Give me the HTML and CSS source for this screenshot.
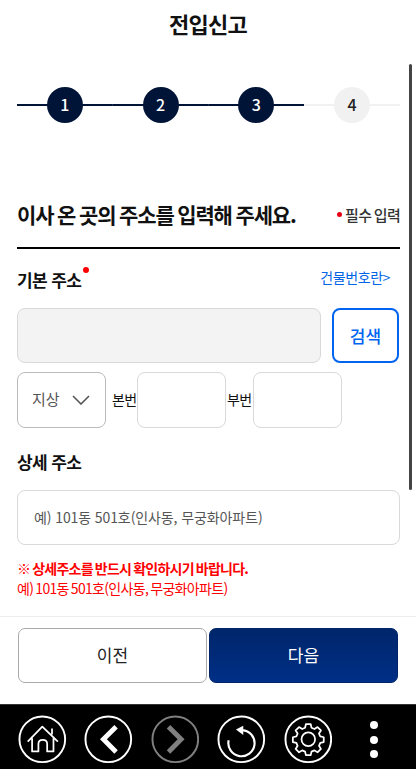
FILE: index.html
```html
<!DOCTYPE html>
<html lang="ko">
<head>
<meta charset="utf-8">
<title>전입신고</title>
<link rel="stylesheet" href="styles.css">
</head>
<body>
<div class="app">
  <header class="title">전입신고</header>
  <main class="content">
    <div class="scrollbar"></div>
    <ol class="steps">
      <li class="step done"><span>1</span></li>
      <li class="step done"><span>2</span></li>
      <li class="step done"><span>3</span></li>
      <li class="step"><span>4</span></li>
    </ol>
    <div class="heading">
      <h1>이사 온 곳의 주소를 입력해 주세요.</h1>
      <p class="req"><i class="dot"></i>필수 입력</p>
    </div>
    <div class="label-row">
      <h2 class="label">기본 주소<i class="dot sup"></i></h2>
      <a class="link">건물번호란&gt;</a>
    </div>
    <div class="addr-row">
      <div class="field disabled"></div>
      <button class="search">검색</button>
    </div>
    <div class="num-row">
      <div class="field select">지상
        <svg width="18" height="10" viewBox="0 0 18 10"><path d="M1 1l8 8 8-8" fill="none" stroke="#555" stroke-width="1.6"/></svg>
      </div>
      <span class="num-label first">본번</span>
      <div class="field num"></div>
      <span class="num-label">부번</span>
      <div class="field num"></div>
    </div>
    <h2 class="label detail">상세 주소</h2>
    <div class="field text">예) 101동 501호(인사동, 무궁화아파트)</div>
    <p class="warn strong">※ 상세주소를 반드시 확인하시기 바랍니다.</p>
    <p class="warn plain">예) 101동 501호(인사동, 무궁화아파트)</p>
  </main>
  <div class="actions">
    <button class="btn prev">이전</button>
    <button class="btn next">다음</button>
  </div>
  <nav class="nav">
    <svg class="ico" viewBox="0 0 50 50"><circle cx="25" cy="25" r="23.5" fill="none" stroke="#fff" stroke-width="2"/><path d="M10 27.500L25 12l16 15.500M35 14v6M14.500 24v13.500h6.500v-8q0-4 4.500-4t4.500 4v8h6.500V24" fill="none" stroke="#fff" stroke-width="1.800" stroke-linejoin="round"/></svg>
    <svg class="ico" viewBox="0 0 50 50"><circle cx="25" cy="25" r="23.500" fill="none" stroke="#fff" stroke-width="2"/><path d="M33 12L20 25l13 13" fill="none" stroke="#fff" stroke-width="5"/></svg>
    <svg class="ico" viewBox="0 0 50 50"><circle cx="25" cy="25" r="23.500" fill="none" stroke="#808080" stroke-width="2"/><path d="M18 12l13 13-13 13" fill="none" stroke="#808080" stroke-width="5"/></svg>
    <svg class="ico" viewBox="0 0 50 50"><circle cx="25" cy="25" r="23.500" fill="none" stroke="#fff" stroke-width="2"/><path d="M26 15.500A13.500 13.500 0 1 1 12 26" fill="none" stroke="#fff" stroke-width="2.200"/><path d="M27 11v9.500L19.500 15z" fill="#fff"/></svg>
    <svg class="ico" viewBox="0 0 50 50"><circle cx="25" cy="25" r="23.500" fill="none" stroke="#fff" stroke-width="2"/><circle cx="25" cy="25" r="7" fill="none" stroke="#fff" stroke-width="1.800"/><path d="M22.500 9.500h5l.8 3.600 3 1.300 3.200-2 3.500 3.500-2 3.200 1.300 3 3.600.8v5l-3.600.8-1.300 3 2 3.200-3.500 3.500-3.200-2-3 1.300-.8 3.600h-5l-.8-3.600-3-1.300-3.200 2-3.500-3.500 2-3.200-1.300-3-3.600-.8v-5l3.600-.8 1.300-3-2-3.200 3.500-3.500 3.200 2 3-1.300z" fill="none" stroke="#fff" stroke-width="1.800" stroke-linejoin="round"/></svg>
    <div class="more"><i></i><i></i><i></i></div>
  </nav>
</div>
</body>
</html>
```

FILE: styles.css
```css
* { box-sizing: border-box; }
html, body { margin: 0; height: 100%; background: #fff; }
body { font-family: "Noto Sans CJK KR", "Noto Sans", sans-serif; color: #111; overflow: hidden; }
.app { height: 775px; display: flex; flex-direction: column; }
.title { height: 48px; flex: none; padding-bottom: 3px; display: flex; align-items: center; justify-content: center; font-size: 22px; font-weight: 700; letter-spacing: -0.8px; }
.content { position: relative; flex: none; height: 569px; padding: 39px 16px 0 17px; border-bottom: 1px solid #eee; }
.scrollbar { position: absolute; right: 4px; top: 16px; width: 3px; height: 426px; background: #444; border-radius: 2px; }
.steps { list-style: none; margin: 0; padding: 0; display: grid; grid-template-columns: repeat(4, 1fr); }
.step { display: flex; justify-content: center; background: linear-gradient(#f1f1f1, #f1f1f1) center / 100% 2px no-repeat; }
.step.done { background-image: linear-gradient(#001438, #001438); }
.step span { width: 36px; height: 36px; padding-bottom: 3px; border-radius: 50%; background: #f1f1f1; display: flex; align-items: center; justify-content: center; font-size: 16px; font-weight: 500; color: #222; }
.step.done span { background: #001438; color: #fff; }
.heading { margin-top: 75px; height: 51px; padding-bottom: 17px; border-bottom: 2px solid #000; display: flex; align-items: center; justify-content: space-between; }
h1 { margin: 0; font-size: 21px; font-weight: 700; letter-spacing: -1.15px; word-spacing: -1px; white-space: nowrap; }
.req { margin: 0; font-size: 15px; font-weight: 500; color: #333; display: flex; align-items: center; gap: 3px; letter-spacing: -0.7px; word-spacing: -1px; }
.dot { display: inline-block; width: 5px; height: 5px; border-radius: 50%; background: #e60012; }
.label-row { margin-top: 18px; height: 24px; display: flex; align-items: center; justify-content: space-between; }
.label { margin: 0; font-size: 17px; font-weight: 700; letter-spacing: -0.6px; position: relative; }
.sup { position: absolute; right: -8px; top: 0; width: 6px; height: 6px; background: #f00; }
.link { font-size: 14px; color: #0064e6; letter-spacing: -0.4px; margin-right: 10px; padding-bottom: 4px; }
.addr-row { margin-top: 17px; display: flex; justify-content: space-between; }
.field { border: 1px solid #d9d9d9; border-radius: 8px; background: #fff; height: 55px; }
.disabled { width: 304px; background: #f3f3f3; }
.search { width: 67px; height: 55px; margin-right: 1px; border: 2px solid #0064f0; border-radius: 8px; background: #fff; color: #0064f0; font: 500 17px "Noto Sans CJK KR", sans-serif; padding: 0; }
.num-row { margin-top: 9px; display: flex; align-items: center; }
.select { width: 89px; height: 56px; border-color: #bbb; display: flex; align-items: center; justify-content: space-between; padding: 0 15px 3px 14px; font-size: 15px; color: #555; }
.select svg { margin-top: 3px; }
.num { width: 89px; height: 56px; }
.num-label { width: 27px; padding: 0 0 2px 1px; font-size: 14px; letter-spacing: -0.6px; white-space: nowrap; }
.first { margin-left: 6px; width: 25px; padding-left: 0; }
.detail { margin-top: 22px; line-height: 24px; }
.text { margin-top: 16px; display: flex; align-items: center; padding: 0 0 2px 16px; font-size: 14px; letter-spacing: -0.1px; color: #555; }
.warn { margin: 0; font-size: 14px; color: #f00; letter-spacing: -0.75px; word-spacing: -1.2px; line-height: 21px; }
.plain { letter-spacing: -0.68px; margin-top: -1px; }
.strong { margin-top: 13px; font-weight: 700; }
.actions { flex: none; height: 87px; padding: 11px 18px 0 18px; display: flex; gap: 2px; }
.btn { flex: 1; height: 55px; border-radius: 7px; font: 400 17px "Noto Sans CJK KR", sans-serif; padding: 0 0 2px; }
.prev { background: #fff; border: 1px solid #aaa; color: #222; }
.next { background: linear-gradient(#00266b, #002f86); border: 1px solid #00246a; color: #fff; }
.nav { flex: none; height: 65px; background: #000; border-top: 1px solid #333; display: flex; align-items: center; padding: 5px 0 0 18px; gap: 17.8px; }
.ico { width: 48.6px; height: 48.6px; flex: none; }
.more { display: flex; flex-direction: column; gap: 6.5px; margin-left: 20px; }
.more i { display: block; width: 8px; height: 8px; border-radius: 50%; background: #fff; }
```
